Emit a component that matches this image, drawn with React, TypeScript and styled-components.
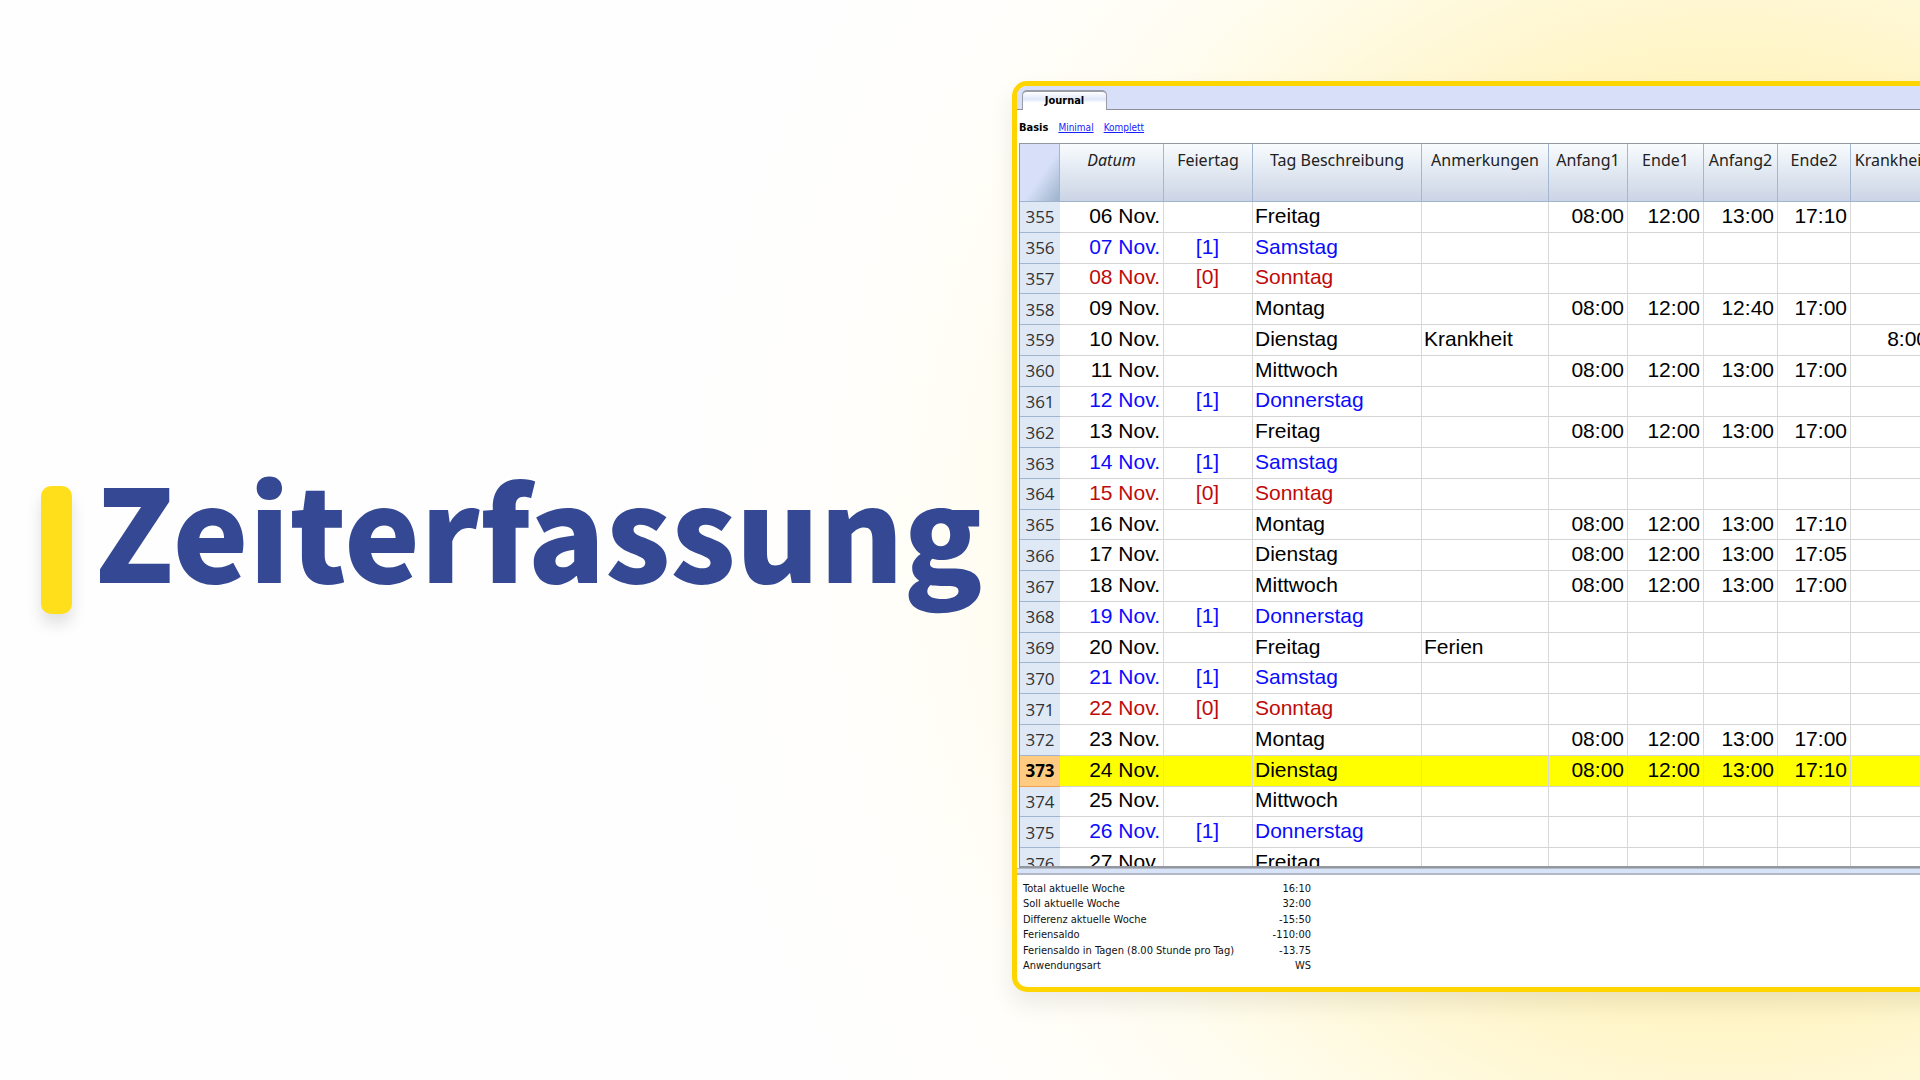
import React from "react";
import styled, { createGlobalStyle, css } from "styled-components";

const sans = `"Open Sans", "Noto Sans", sans-serif`;
const arial = `"Liberation Sans", Arial, sans-serif`;
const small = `"DejaVu Sans Condensed", "DejaVu Sans", sans-serif`;

const GlobalStyle = createGlobalStyle`
  *, *::before, *::after { box-sizing: border-box; }
  html, body { margin: 0; background: #fefefe; }
`;

const Page = styled.main`
  display: flex;
  align-items: center;
  min-height: 100vh;
  padding-left: 41px;
  overflow: hidden;
  background: radial-gradient(
    circle 1040px at 90% 50%,
    #ffee9c 0,
    #fff4c2 44%,
    #fff7d2 52%,
    #fffae2 61%,
    #fffdf1 70%,
    #fffefb 85%,
    #fefefe 100%
  );
`;

const Hero = styled.header`
  display: flex;
  align-items: center;
  flex: 0 0 971px;
  gap: 23px;
`;

const Accent = styled.span`
  width: 31px;
  height: 128px;
  margin-top: 20px;
  border-radius: 10px;
  background: #ffdf1b;
  box-shadow: 0 10px 16px rgba(0, 0, 0, 0.12);
`;

const Title = styled.h1`
  margin: 0 0 24px;
  color: #344893;
  font: 900 128px/192px "Noto Sans CJK SC", "Open Sans", sans-serif;
`;

const Window = styled.section`
  flex: 0 0 1000px;
  margin-bottom: 7px;
  overflow: hidden;
  border: 5px solid #ffd500;
  border-radius: 15px;
  background: #fff;
  box-shadow: 0 12px 24px rgba(0, 0, 0, 0.08);
`;

const TabBar = styled.nav`
  display: flex;
  align-items: flex-end;
  height: 24px;
  padding-left: 5px;
  border-bottom: 1px solid #8e8f98;
  background: #d7e0f8;
`;

const Tab = styled.button`
  width: 85px;
  height: 20px;
  margin-bottom: -1px;
  padding: 0;
  border: 1px solid #9a9ca8;
  border-width: 2px 1px 0;
  border-radius: 5px 5px 0 0;
  background: linear-gradient(#fff 0, #dfe7fa 40%, #fff 60%);
  color: #000;
  font: 700 11px/16px ${small};
`;

const Views = styled.nav`
  display: flex;
  align-items: center;
  gap: 10px;
  height: 33px;
  padding: 3px 0 0 2px;
  font: 10px/14px ${small};

  a { color: #1b1bff; }
  b { font-size: 11px; }
`;

const Sheet = styled.div`
  height: 725px;
  margin-left: 2px;
  overflow: hidden;
  border: 1px solid #93979f;
  border-width: 1px 0 2px 1px;
`;

const Grid = styled.table`
  width: 912px;
  height: 735px;
  border-collapse: separate;
  border-spacing: 0;
  table-layout: fixed;
  font: 21px/24px ${arial};
`;

const HeadCell = styled.th<{ $italic?: boolean }>`
  height: 58px;
  padding: 4px 0 0;
  border-right: 1px solid #a3b8d0;
  border-bottom: 1px solid #a0b4cd;
  background: linear-gradient(#f8fcfe, #cbd4e5);
  color: #222;
  font: 400 16px/24px "Noto Sans", sans-serif;
  font-style: ${(p) => (p.$italic ? "italic" : "normal")};
  vertical-align: top;
  white-space: nowrap;
`;

const Corner = styled.td`
  border-right: 1px solid #a3b8d0;
  border-bottom: 1px solid #a0b4cd;
  background: linear-gradient(125deg, #d7e0f8 55%, #9db2cc 100%);
`;

const tones = { work: "#000", off: "#0b0bff", sunday: "#c00a0a" };
type Tone = keyof typeof tones;

const Row = styled.tr<{ $tone: Tone; $active?: boolean }>`
  color: ${(p) => tones[p.$tone]};
  background: ${(p) => (p.$active ? "#ffff00" : "#fff")};
`;

const RowHead = styled.th<{ $active?: boolean }>`
  padding: 1px 0 0;
  border-bottom: 1px solid #9fb6d0;
  background: #dfe9f6;
  color: #333;
  font: 400 17px/24px ${sans};
  ${(p) => p.$active && css`
    border-color: #f0a050;
    background: #ffcb80;
    color: #000;
    font-weight: 700;
  `}
`;

const Cell = styled.td<{ $align?: "left" | "center" | "right" }>`
  padding: 0 3px 2px 2px;
  border-right: 1px solid #d9d9d9;
  border-bottom: 1px solid #d4d4d4;
  text-align: ${(p) => p.$align ?? "right"};
  white-space: nowrap;
`;

const Splitter = styled.div`
  height: 7px;
  border: 1px solid #b4b8c4;
  border-width: 1px 0 2px;
  background: #d7e3f8;
`;

const Footer = styled.footer`
  padding: 6px 0 13px 6px;
`;

const Summary = styled.table`
  width: 288px;
  height: 93px;
  border-collapse: collapse;
  color: #111;
  font: 11px/14px ${small};

  th { padding: 0; font-weight: 400; text-align: left; white-space: nowrap; }
  td { padding: 0; text-align: right; }
`;

const columns: [string, number][] = [
  ["Datum", 104],
  ["Feiertag", 89],
  ["Tag Beschreibung", 169],
  ["Anmerkungen", 127],
  ["Anfang1", 79],
  ["Ende1", 76],
  ["Anfang2", 74],
  ["Ende2", 73],
  ["Krankheit", 81],
];

const weekdays = ["Sonntag", "Montag", "Dienstag", "Mittwoch", "Donnerstag", "Freitag", "Samstag"];

const times: Record<number, [string, string]> = {
  6: ["13:00", "17:10"],
  9: ["12:40", "17:00"],
  11: ["13:00", "17:00"],
  13: ["13:00", "17:00"],
  16: ["13:00", "17:10"],
  17: ["13:00", "17:05"],
  18: ["13:00", "17:00"],
  23: ["13:00", "17:00"],
  24: ["13:00", "17:10"],
};
const notes: Record<number, string> = { 10: "Krankheit", 20: "Ferien" };
const sickHours: Record<number, string> = { 10: "8:00" };
const today = 24;

const days = Array.from({ length: 22 }, (_, i) => {
  const day = i + 6;
  const weekday = weekdays[(day - 1) % 7];
  const tone: Tone =
    weekday === "Sonntag" ? "sunday" : weekday === "Samstag" || weekday === "Donnerstag" ? "off" : "work";
  return { day, weekday, tone, row: 355 + i };
});

const marks: Record<Tone, string> = { work: "", off: "[1]", sunday: "[0]" };

const summary: [string, string][] = [
  ["Total aktuelle Woche", "16:10"],
  ["Soll aktuelle Woche", "32:00"],
  ["Differenz aktuelle Woche", "-15:50"],
  ["Feriensaldo", "-110:00"],
  ["Feriensaldo in Tagen (8.00 Stunde pro Tag)", "-13.75"],
  ["Anwendungsart", "WS"],
];

export default function App() {
  return (
    <Page>
      <GlobalStyle />
      <Hero>
        <Accent />
        <Title>Zeiterfassung</Title>
      </Hero>
      <Window>
        <TabBar>
          <Tab type="button">Journal</Tab>
        </TabBar>
        <Views>
          <b>Basis</b>
          <a href="#minimal">Minimal</a>
          <a href="#komplett">Komplett</a>
        </Views>
        <Sheet>
          <Grid>
            <colgroup>
              <col width={40} />
              {columns.map(([name, width]) => (
                <col key={name} width={width} />
              ))}
            </colgroup>
            <thead>
              <tr>
                <Corner />
                {columns.map(([name]) => (
                  <HeadCell key={name} scope="col" $italic={name === "Datum"}>
                    {name}
                  </HeadCell>
                ))}
              </tr>
            </thead>
            <tbody>
              {days.map(({ day, weekday, tone, row }) => (
                <Row key={day} $tone={tone} $active={day === today}>
                  <RowHead scope="row" $active={day === today}>{row}</RowHead>
                  <Cell>{String(day).padStart(2, "0")} Nov.</Cell>
                  <Cell $align="center">{marks[tone]}</Cell>
                  <Cell $align="left">{weekday}</Cell>
                  <Cell $align="left">{notes[day]}</Cell>
                  <Cell>{times[day] && "08:00"}</Cell>
                  <Cell>{times[day] && "12:00"}</Cell>
                  <Cell>{times[day]?.[0]}</Cell>
                  <Cell>{times[day]?.[1]}</Cell>
                  <Cell>{sickHours[day]}</Cell>
                </Row>
              ))}
            </tbody>
          </Grid>
        </Sheet>
        <Splitter />
        <Footer>
          <Summary>
            <tbody>
              {summary.map(([label, value]) => (
                <tr key={label}>
                  <th scope="row">{label}</th>
                  <td>{value}</td>
                </tr>
              ))}
            </tbody>
          </Summary>
        </Footer>
      </Window>
    </Page>
  );
}
